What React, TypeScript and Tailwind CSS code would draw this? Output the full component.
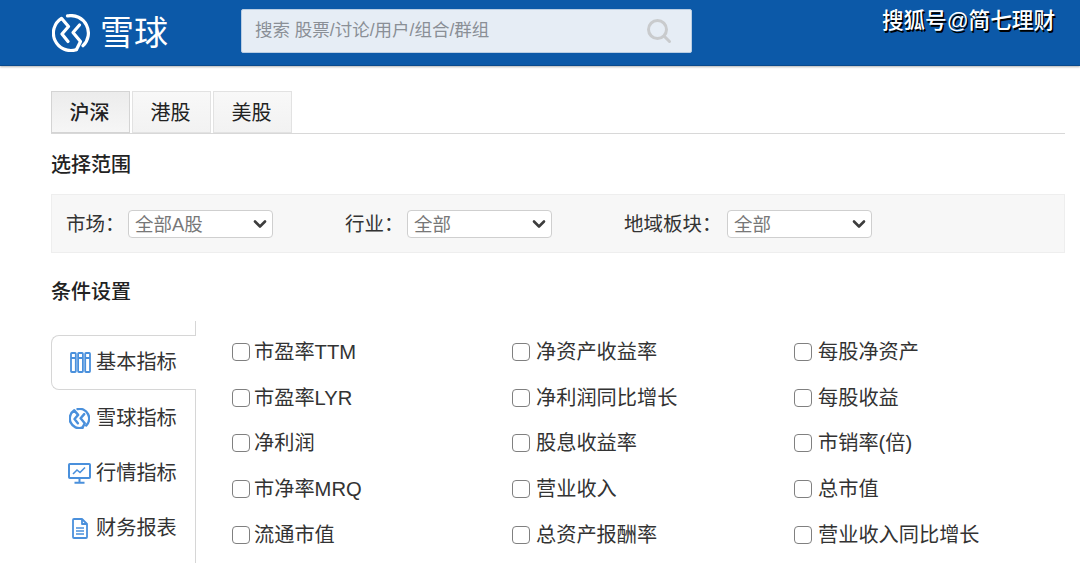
import React from "react";

const font = { fontFamily: '"Liberation Sans","Noto Sans CJK SC",sans-serif' };

function LogoMark({ size, color, sw = 3.2 }: { size: number; color: string; sw?: number }) {
  return (
    <svg width={size} height={size} viewBox="0 0 38 38" fill="none" stroke={color} strokeWidth={sw} strokeLinecap="round" strokeLinejoin="round">
      <path d="M24 35.8A17.5 17.5 0 0 1 9.5 4.3L16.5 12.5 10 20l6 7.5" />
      <path d="M15.5 1.9A17.5 17.5 0 0 1 31 31.7" />
      <path d="M27.5 11 21 18.5l7.5 9-4 8" />
    </svg>
  );
}

function Select({ value }: { value: string }) {
  return (
    <div className="w-[145px] h-[28px] bg-white border border-[#cfcfcf] rounded-[4px] flex items-center justify-between pl-[6px] pr-[5px] text-[18.5px] text-[#777777]">
      <span className="pt-[3px]">{value}</span>
      <svg width="14" height="10" viewBox="0 0 14 10" fill="none" stroke="#3d3d3d" strokeWidth="2.6" strokeLinecap="round" strokeLinejoin="round">
        <path d="M2 2.5 7 7.5l5-5" />
      </svg>
    </div>
  );
}

const BarsIcon = () => (
  <svg width="21" height="21" viewBox="0 0 21 21" fill="none" stroke="#4a90dc" strokeWidth="1.8">
    <rect x="1" y="1" width="4.8" height="19" rx="0.8" />
    <rect x="8.1" y="1" width="4.8" height="19" rx="0.8" />
    <rect x="15.2" y="1" width="4.8" height="19" rx="0.8" />
    <path d="M1 6h4.8M8.1 6h4.8M15.2 6h4.8" />
  </svg>
);

const ScreenIcon = () => (
  <svg width="23" height="21" viewBox="0 0 23 21" fill="none" stroke="#4a90dc" strokeWidth="2">
    <rect x="1" y="1" width="21" height="14" rx="0.8" />
    <path d="M5 11l4-4 3 2.5 5-5" strokeWidth="1.6" />
    <path d="M11.5 15v4.5M6.5 19.8h10" />
  </svg>
);

const DocIcon = () => (
  <svg width="16" height="21" viewBox="0 0 16 21" fill="none" stroke="#4a90dc" strokeWidth="1.8" strokeLinejoin="round">
    <path d="M1 2a1 1 0 0 1 1-1h8l5 5v13a1 1 0 0 1-1 1H2a1 1 0 0 1-1-1z" />
    <path d="M10 1v5h5" />
    <path d="M4 10h8M4 13h8M4 16h8" strokeWidth="1.3" />
  </svg>
);

const columns = [
  { w: "w-[280px]", gap: "mr-[4px]", items: ["市盈率TTM", "市盈率LYR", "净利润", "市净率MRQ", "流通市值"] },
  { w: "w-[282px]", gap: "mr-[6px]", items: ["净资产收益率", "净利润同比增长", "股息收益率", "营业收入", "总资产报酬率"] },
  { w: "w-[282px]", gap: "mr-[6px]", items: ["每股净资产", "每股收益", "市销率(倍)", "总市值", "营业收入同比增长"] },
];

function Check({ label, gap }: { label: string; gap: string }) {
  return (
    <div className="h-[45.75px] flex items-center text-[20.2px] leading-none text-[#333333]">
      <span className={`w-[18px] h-[18px] border border-[#808080] rounded-[4px] bg-white shrink-0 ${gap}`} />
      <span>{label}</span>
    </div>
  );
}

export default function App() {
  return (
    <div className="w-[1080px] h-[563px] overflow-hidden bg-white text-[#333333]" style={font}>
      <header className="relative h-[66px] bg-[#0c59a8] border-b border-[#0a4a8c] shadow-[0_1px_2px_rgba(0,0,0,0.3)] flex items-center pl-[52px]">
        <LogoMark size={38} color="#ffffff" />
        <span className="ml-[10px] w-[69px] whitespace-nowrap text-[34px] leading-none font-normal text-white">雪球</span>
        <div className="ml-[72px] w-[451px] h-[44px] bg-[#e6edf5] border border-[#b9cde3] rounded-[2px] flex items-center justify-between pl-[13px] pr-[19px] mb-[4px]">
          <span className="text-[17.5px] text-[#8a8f96]">搜索 股票/讨论/用户/组合/群组</span>
          <svg width="26" height="26" viewBox="0 0 26 26" fill="none" stroke="#c9cbcd" strokeWidth="3" strokeLinecap="round">
            <circle cx="11.5" cy="11.5" r="9" />
            <path d="M18.5 18.5l5 5" />
          </svg>
        </div>
        <span className="absolute right-[25px] top-[7px] text-[21.6px] font-medium leading-[28px] text-white [text-shadow:1.5px_1.5px_0_#000]">搜狐号@简七理财</span>
      </header>

      <main className="pl-[51px] pr-[15px] pt-[25px]">
        <nav className="flex gap-[2px] h-[43px] border-b border-[#d8d8d8] text-[20px] text-[#222222]">
          <div className="w-[79px] h-[42px] flex items-center justify-center pr-[2px] pt-[2px] font-medium bg-gradient-to-b from-[#ececec] to-[#f6f6f6] border border-[#d4d4d4]">沪深</div>
          <div className="w-[79px] h-[42px] flex items-center justify-center pr-[2px] pt-[2px] bg-gradient-to-b from-[#f8f8f8] to-[#f2f2f2] border border-[#e2e2e2]">港股</div>
          <div className="w-[79px] h-[42px] flex items-center justify-center pr-[2px] pt-[2px] bg-gradient-to-b from-[#f8f8f8] to-[#f2f2f2] border border-[#e2e2e2]">美股</div>
        </nav>

        <h2 className="mt-[17px] h-[28px] text-[20px] leading-[28px] font-medium text-[#222222]">选择范围</h2>

        <section className="mt-[15px] h-[59px] bg-[#f7f7f7] border border-[#eeeeee] flex items-center pl-[14px] text-[19.5px] text-[#333333]">
          <span className="w-[62px] pt-[2px]">市场：</span>
          <Select value="全部A股" />
          <span className="ml-[72px] w-[62px] pt-[2px]">行业：</span>
          <Select value="全部" />
          <span className="ml-[72px] w-[103px] pt-[2px]">地域板块：</span>
          <Select value="全部" />
        </section>

        <h2 className="mt-[25px] h-[28px] text-[20px] leading-[28px] font-medium text-[#222222]">条件设置</h2>

        <section className="mt-[15px] flex">
          <aside className="relative w-[145px] h-[300px] shrink-0 text-[20.2px] text-[#333333]">
            <div className="absolute right-0 top-0 bottom-0 w-px bg-[#d6d6d6]" />
            <div className="relative mt-[14px] h-[55px] w-[145px] bg-white border border-r-0 border-[#d6d6d6] rounded-l-[8px] flex items-center pl-[18px] gap-[5px]">
              <BarsIcon />
              <span>基本指标</span>
            </div>
            <div className="mt-px h-[55px] flex items-center pl-[18px] gap-[6px]">
              <LogoMark size={21} color="#4a90dc" sw={4.4} />
              <span>雪球指标</span>
            </div>
            <div className="h-[55px] flex items-center pl-[17px] gap-[5px]">
              <ScreenIcon />
              <span>行情指标</span>
            </div>
            <div className="h-[55px] flex items-center pl-[21px] gap-[8px]">
              <DocIcon />
              <span>财务报表</span>
            </div>
          </aside>
          <div className="flex pl-[36px] pt-[8px]">
            {columns.map((col, i) => (
              <div key={i} className={col.w}>
                {col.items.map((l) => (
                  <Check key={l} label={l} gap={col.gap} />
                ))}
              </div>
            ))}
          </div>
        </section>
      </main>
    </div>
  );
}
